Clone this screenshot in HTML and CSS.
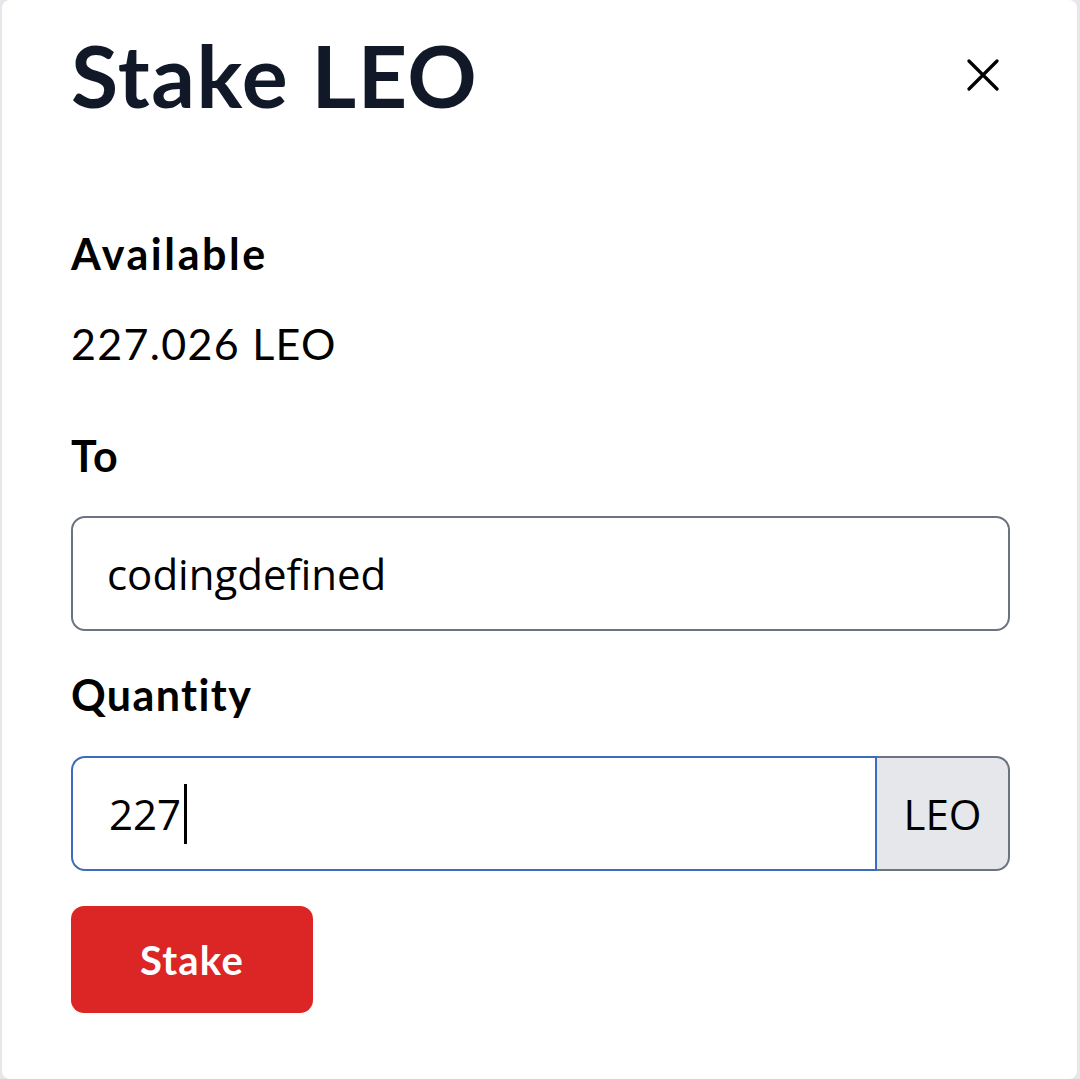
FILE: index.html
```html
<!DOCTYPE html>
<html lang="en">
<head>
<meta charset="utf-8">
<title>Stake LEO</title>
<link rel="stylesheet" href="styles.css">
</head>
<body>
<div class="modal">
  <div class="header">
    <h1 class="title">Stake LEO</h1>
    <button class="close" aria-label="Close">
      <svg width="32" height="32" viewBox="0 0 32 32"><path d="M2 2 L30 30 M30 2 L2 30" stroke="#000" stroke-width="3.2" stroke-linecap="round" fill="none"/></svg>
    </button>
  </div>
  <div class="label lbl-available">Available</div>
  <div class="value">227.026 LEO</div>
  <div class="label lbl-to">To</div>
  <div class="field">codingdefined</div>
  <div class="label lbl-qty">Quantity</div>
  <div class="group">
    <div class="field focus">227<span class="caret"></span></div>
    <div class="addon">LEO</div>
  </div>
  <button class="stake">Stake</button>
</div>
</body>
</html>
```
FILE: styles.css
```css
html, body {
  margin: 0;
  padding: 0;
  background: #e6e6eb;
}
body {
  font-family: "Lato", "Liberation Sans", sans-serif;
  color: #000;
}
.modal {
  margin: 0 3px 0 2px;
  background: #fff;
  border-radius: 8px;
  min-height: 1079px;
  box-sizing: border-box;
  padding: 0 67px 0 69px;
  display: flex;
  flex-direction: column;
  align-items: stretch;
}
.header {
  height: 150px;
  display: flex;
  align-items: center;
  justify-content: space-between;
}
.title {
  margin: 0;
  font-size: 86px;
  font-weight: 700;
  color: #111827;
  line-height: 1;
  letter-spacing: 1.5px;
}
.close {
  background: none;
  border: 0;
  padding: 0;
  margin-right: 11px;
  width: 32px;
  height: 32px;
  display: flex;
}
.label {
  font-size: 43px;
  font-weight: 700;
  line-height: 52px;
  letter-spacing: 1.4px;
}
.lbl-available { margin-top: 78px; letter-spacing: 2.6px; }
.value {
  font-size: 43px;
  line-height: 52px;
  margin-top: 38px;
  letter-spacing: 1.3px;
}
.lbl-to { margin-top: 60px; }
.field {
  margin-top: 34px;
  height: 115px;
  box-sizing: border-box;
  border: 2px solid #6b7280;
  border-radius: 14px;
  padding: 0 34px;
  display: flex;
  align-items: center;
  font-family: "Open Sans", "Liberation Sans", sans-serif;
  font-size: 42px;
  color: #000;
}
.lbl-qty { margin-top: 38px; }
.group {
  margin-top: 35px;
  display: flex;
  height: 115px;
}
.group .field {
  margin-top: 0;
  flex: 1;
  height: 100%;
  border-color: #3b6cc0;
  border-radius: 14px 0 0 14px;
  padding-left: 36px;
}
.caret {
  display: inline-block;
  width: 3px;
  height: 60px;
  background: #000;
  margin-left: 3px;
}
.addon {
  width: 133px;
  box-sizing: border-box;
  border: 2px solid #6b7280;
  border-left: 0;
  border-radius: 0 14px 14px 0;
  background: #e5e7eb;
  display: flex;
  align-items: center;
  justify-content: center;
  font-family: "Open Sans", "Liberation Sans", sans-serif;
  font-size: 42px;
  color: #000;
}
.stake {
  margin-top: 35px;
  align-self: flex-start;
  width: 242px;
  height: 107px;
  border: 0;
  border-radius: 13px;
  background: #dc2626;
  color: #fff;
  font-family: "Lato", "Liberation Sans", sans-serif;
  font-weight: 700;
  font-size: 40px;
  letter-spacing: 1.2px;
}
```
